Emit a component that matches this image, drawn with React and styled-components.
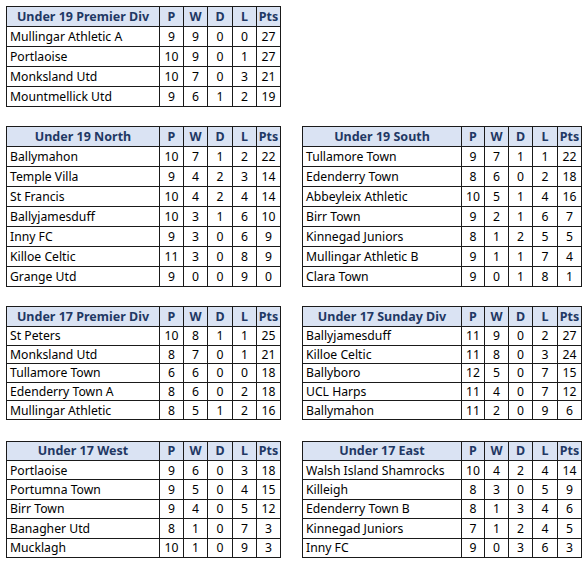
import React from 'react'
import styled, { createGlobalStyle } from 'styled-components'

const GlobalStyle = createGlobalStyle`
  body {
    margin: 0;
    background: #ffffff;
    font-family: "Noto Sans", "Open Sans", sans-serif;
  }
`

const leagues = [
  {
    title: 'Under 19 Premier Div',
    side: 'left',
    headH: 20,
    rowH: 20,
    rows: [
      ['Mullingar Athletic A', 9, 9, 0, 0, 27],
      ['Portlaoise', 10, 9, 0, 1, 27],
      ['Monksland Utd', 10, 7, 0, 3, 21],
      ['Mountmellick Utd', 9, 6, 1, 2, 19],
    ],
  },
  null,
  {
    title: 'Under 19 North',
    side: 'left',
    headH: 20,
    rowH: 20,
    rows: [
      ['Ballymahon', 10, 7, 1, 2, 22],
      ['Temple Villa', 9, 4, 2, 3, 14],
      ['St Francis', 10, 4, 2, 4, 14],
      ['Ballyjamesduff', 10, 3, 1, 6, 10],
      ['Inny FC', 9, 3, 0, 6, 9],
      ['Killoe Celtic', 11, 3, 0, 8, 9],
      ['Grange Utd', 9, 0, 0, 9, 0],
    ],
  },
  {
    title: 'Under 19 South',
    side: 'right',
    headH: 20,
    rowH: 20,
    rows: [
      ['Tullamore Town', 9, 7, 1, 1, 22],
      ['Edenderry Town', 8, 6, 0, 2, 18],
      ['Abbeyleix Athletic', 10, 5, 1, 4, 16],
      ['Birr Town', 9, 2, 1, 6, 7],
      ['Kinnegad Juniors', 8, 1, 2, 5, 5],
      ['Mullingar Athletic B', 9, 1, 1, 7, 4],
      ['Clara Town', 9, 0, 1, 8, 1],
    ],
  },
  {
    title: 'Under 17 Premier Div',
    side: 'left',
    headH: 20,
    rowH: 18.6,
    rows: [
      ['St Peters', 10, 8, 1, 1, 25],
      ['Monksland Utd', 8, 7, 0, 1, 21],
      ['Tullamore Town', 6, 6, 0, 0, 18],
      ['Edenderry Town A', 8, 6, 0, 2, 18],
      ['Mullingar Athletic', 8, 5, 1, 2, 16],
    ],
  },
  {
    title: 'Under 17 Sunday Div',
    side: 'right',
    headH: 20,
    rowH: 18.6,
    rows: [
      ['Ballyjamesduff', 11, 9, 0, 2, 27],
      ['Killoe Celtic', 11, 8, 0, 3, 24],
      ['Ballyboro', 12, 5, 0, 7, 15],
      ['UCL Harps', 11, 4, 0, 7, 12],
      ['Ballymahon', 11, 2, 0, 9, 6],
    ],
  },
  {
    title: 'Under 17 West',
    side: 'left',
    headH: 19,
    rowH: 19.4,
    lower: true,
    rows: [
      ['Portlaoise', 9, 6, 0, 3, 18],
      ['Portumna Town', 9, 5, 0, 4, 15],
      ['Birr Town', 9, 4, 0, 5, 12],
      ['Banagher Utd', 8, 1, 0, 7, 3],
      ['Mucklagh', 10, 1, 0, 9, 3],
    ],
  },
  {
    title: 'Under 17 East',
    side: 'right',
    headH: 19,
    rowH: 19.4,
    lower: true,
    rows: [
      ['Walsh Island Shamrocks', 10, 4, 2, 4, 14],
      ['Killeigh', 8, 3, 0, 5, 9],
      ['Edenderry Town B', 8, 1, 3, 4, 6],
      ['Kinnegad Juniors', 7, 1, 2, 4, 5],
      ['Inny FC', 9, 0, 3, 6, 3],
    ],
  },
]

const widths = {
  left: [153, 24, 24, 25, 24, 24],
  right: [159, 23, 24, 24, 25, 24],
}

const Sheet = () => (
  <Page>
    <GlobalStyle />
    {leagues.map((league, i) =>
      league ? <LeagueTable key={i} league={league} /> : <span key={i} />
    )}
  </Page>
)

const LeagueTable = ({ league }) => {
  const cols = widths[league.side]
  return (
    <Table $width={cols.reduce((a, b) => a + b, 0)} $lower={league.lower}>
      <colgroup>
        {cols.map((w, i) => (
          <col key={i} style={{ width: w }} />
        ))}
      </colgroup>
      <thead>
        <HeadRow $h={league.headH}>
          <HeadCell>{league.title}</HeadCell>
          <HeadCell>P</HeadCell>
          <HeadCell>W</HeadCell>
          <HeadCell>D</HeadCell>
          <HeadCell>L</HeadCell>
          <HeadCell $tight>Pts</HeadCell>
        </HeadRow>
      </thead>
      <tbody>
        {league.rows.map((row) => (
          <Row key={row[0]} $h={league.rowH}>
            <NameCell>{row[0]}</NameCell>
            {row.slice(1).map((v, j) => (
              <NumCell key={j}>{v}</NumCell>
            ))}
          </Row>
        ))}
      </tbody>
    </Table>
  )
}

export default Sheet

const Page = styled.div`
  display: grid;
  grid-template-columns: 274px 279px;
  column-gap: 22px;
  row-gap: 19px;
  padding: 6px 0 0 6px;
  align-items: start;
`

const Table = styled.table`
  width: ${(p) => p.$width}px;
  margin-top: ${(p) => (p.$lower ? 2 : 0)}px;
  table-layout: fixed;
  border-collapse: collapse;
  color: #000;
  font-size: 12.2px;
  line-height: 15px;
`

const HeadRow = styled.tr`
  height: ${(p) => p.$h}px;
  background: #dae3f3;
`

const HeadCell = styled.th`
  border: 1px solid #1a1a1a;
  padding: 0 ${(p) => (p.$tight ? 0 : 2)}px;
  color: #1f3864;
  font-weight: 700;
  font-size: 12.5px;
  text-align: center;
  white-space: nowrap;
  overflow: hidden;
`

const Row = styled.tr`
  height: ${(p) => p.$h}px;
`

const NameCell = styled.td`
  border: 1px solid #1a1a1a;
  padding: 0 3px;
  white-space: nowrap;
  overflow: hidden;
`

const NumCell = styled.td`
  border: 1px solid #1a1a1a;
  padding: 0;
  text-align: center;
`
